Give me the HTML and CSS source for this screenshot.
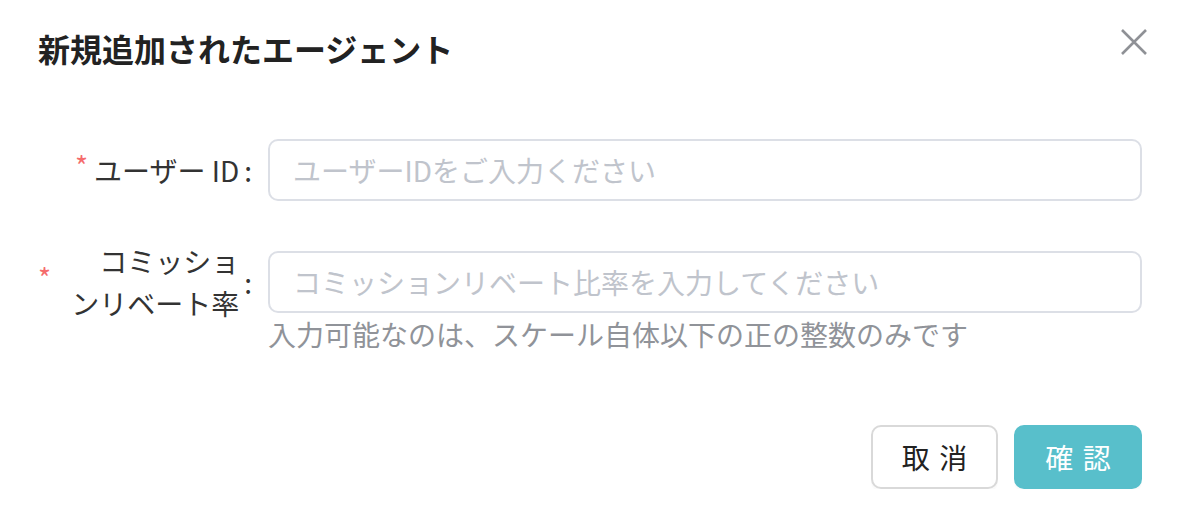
FILE: index.html
```html
<!DOCTYPE html>
<html lang="ja">
<head>
    <meta charset="UTF-8">
    <meta name="viewport" content="width=device-width, initial-scale=1.0">
    <title>新規追加されたエージェント</title>
    <link rel="stylesheet" href="styles.css">
</head>
<body>
    <div class="dialog">
        <header class="dialog-header">
            <h1 class="dialog-title">新規追加されたエージェント</h1>
            <button class="close-btn" aria-label="close">
                <svg width="28" height="28" viewBox="0 0 28 28">
                    <path d="M2 2 L26 26 M26 2 L2 26" stroke="#8f9196" stroke-width="2.6" fill="none"/>
                </svg>
            </button>
        </header>

        <form class="form">
            <div class="form-row">
                <label class="form-label">
                    <span class="required">*</span>
                    <span class="label-text">ユーザー ID</span>
                    <span class="colon">:</span>
                </label>
                <div class="form-field">
                    <input class="input" type="text" placeholder="ユーザーIDをご入力ください">
                </div>
            </div>

            <div class="form-row">
                <label class="form-label">
                    <span class="required">*</span>
                    <span class="label-text wide">コミッショ<br>ンリベート率</span>
                    <span class="colon">:</span>
                </label>
                <div class="form-field">
                    <input class="input" type="text" placeholder="コミッションリベート比率を入力してください">
                    <div class="hint">入力可能なのは、スケール自体以下の正の整数のみです</div>
                </div>
            </div>
        </form>

        <footer class="dialog-footer">
            <button class="btn">取 消</button>
            <button class="btn btn-primary">確 認</button>
        </footer>
    </div>
</body>
</html>
```

FILE: styles.css
```css
body, html {
    margin: 0;
    padding: 0;
    background: #fff;
    font-family: "Noto Sans CJK JP", "Noto Sans", sans-serif;
    color: #303133;
}
.dialog {
    padding: 26px 36px 0 38px;
}
.dialog-header {
    display: flex;
    justify-content: space-between;
    align-items: flex-start;
}
.dialog-title {
    margin: 0;
    font-size: 32px;
    line-height: 44px;
    font-weight: 700;
    color: #222;
}
.close-btn {
    border: none;
    background: none;
    padding: 0;
    margin: 2px -6px 0 0;
    width: 28px;
    height: 28px;
    cursor: pointer;
}
.form {
    margin-top: 69px;
    display: flex;
    flex-direction: column;
    gap: 50px;
}
.form-row {
    display: grid;
    grid-template-columns: 214px 1fr;
    column-gap: 16px;
    align-items: start;
}
.form-label {
    display: flex;
    justify-content: flex-end;
    align-items: center;
    height: 62px;
    font-size: 28px;
    line-height: 42px;
    color: #333;
}
.required {
    color: #f56c6c;
    font-size: 28px;
    margin-right: 6px;
    position: relative;
    top: -5px;
}
.label-text {
    text-align: right;
}
.label-text.wide {
    flex: 1;
}
.colon {
    margin-left: 5px;
}
.input {
    display: block;
    box-sizing: border-box;
    width: 100%;
    height: 62px;
    border: 2px solid #dcdfe6;
    border-radius: 10px;
    padding: 0 23px;
    font-family: inherit;
    font-size: 28px;
    color: #333;
    outline: none;
}
.input::placeholder {
    color: #c0c4cc;
}
.hint {
    font-size: 28px;
    line-height: 42px;
    color: #909399;
}
.dialog-footer {
    display: flex;
    justify-content: flex-end;
    gap: 16px;
    margin-top: 70px;
}
.btn {
    box-sizing: border-box;
    width: 127px;
    height: 64px;
    border: 2px solid #d9d9d9;
    border-radius: 10px;
    background: #fff;
    font-family: inherit;
    font-size: 28px;
    word-spacing: 3px;
    color: #222;
    box-shadow: 0 3px 0 rgba(0, 0, 0, 0.02);
    cursor: pointer;
}
.btn-primary {
    width: 128px;
    border-color: #58bfcb;
    background: #58bfcb;
    color: #fff;
}
```
